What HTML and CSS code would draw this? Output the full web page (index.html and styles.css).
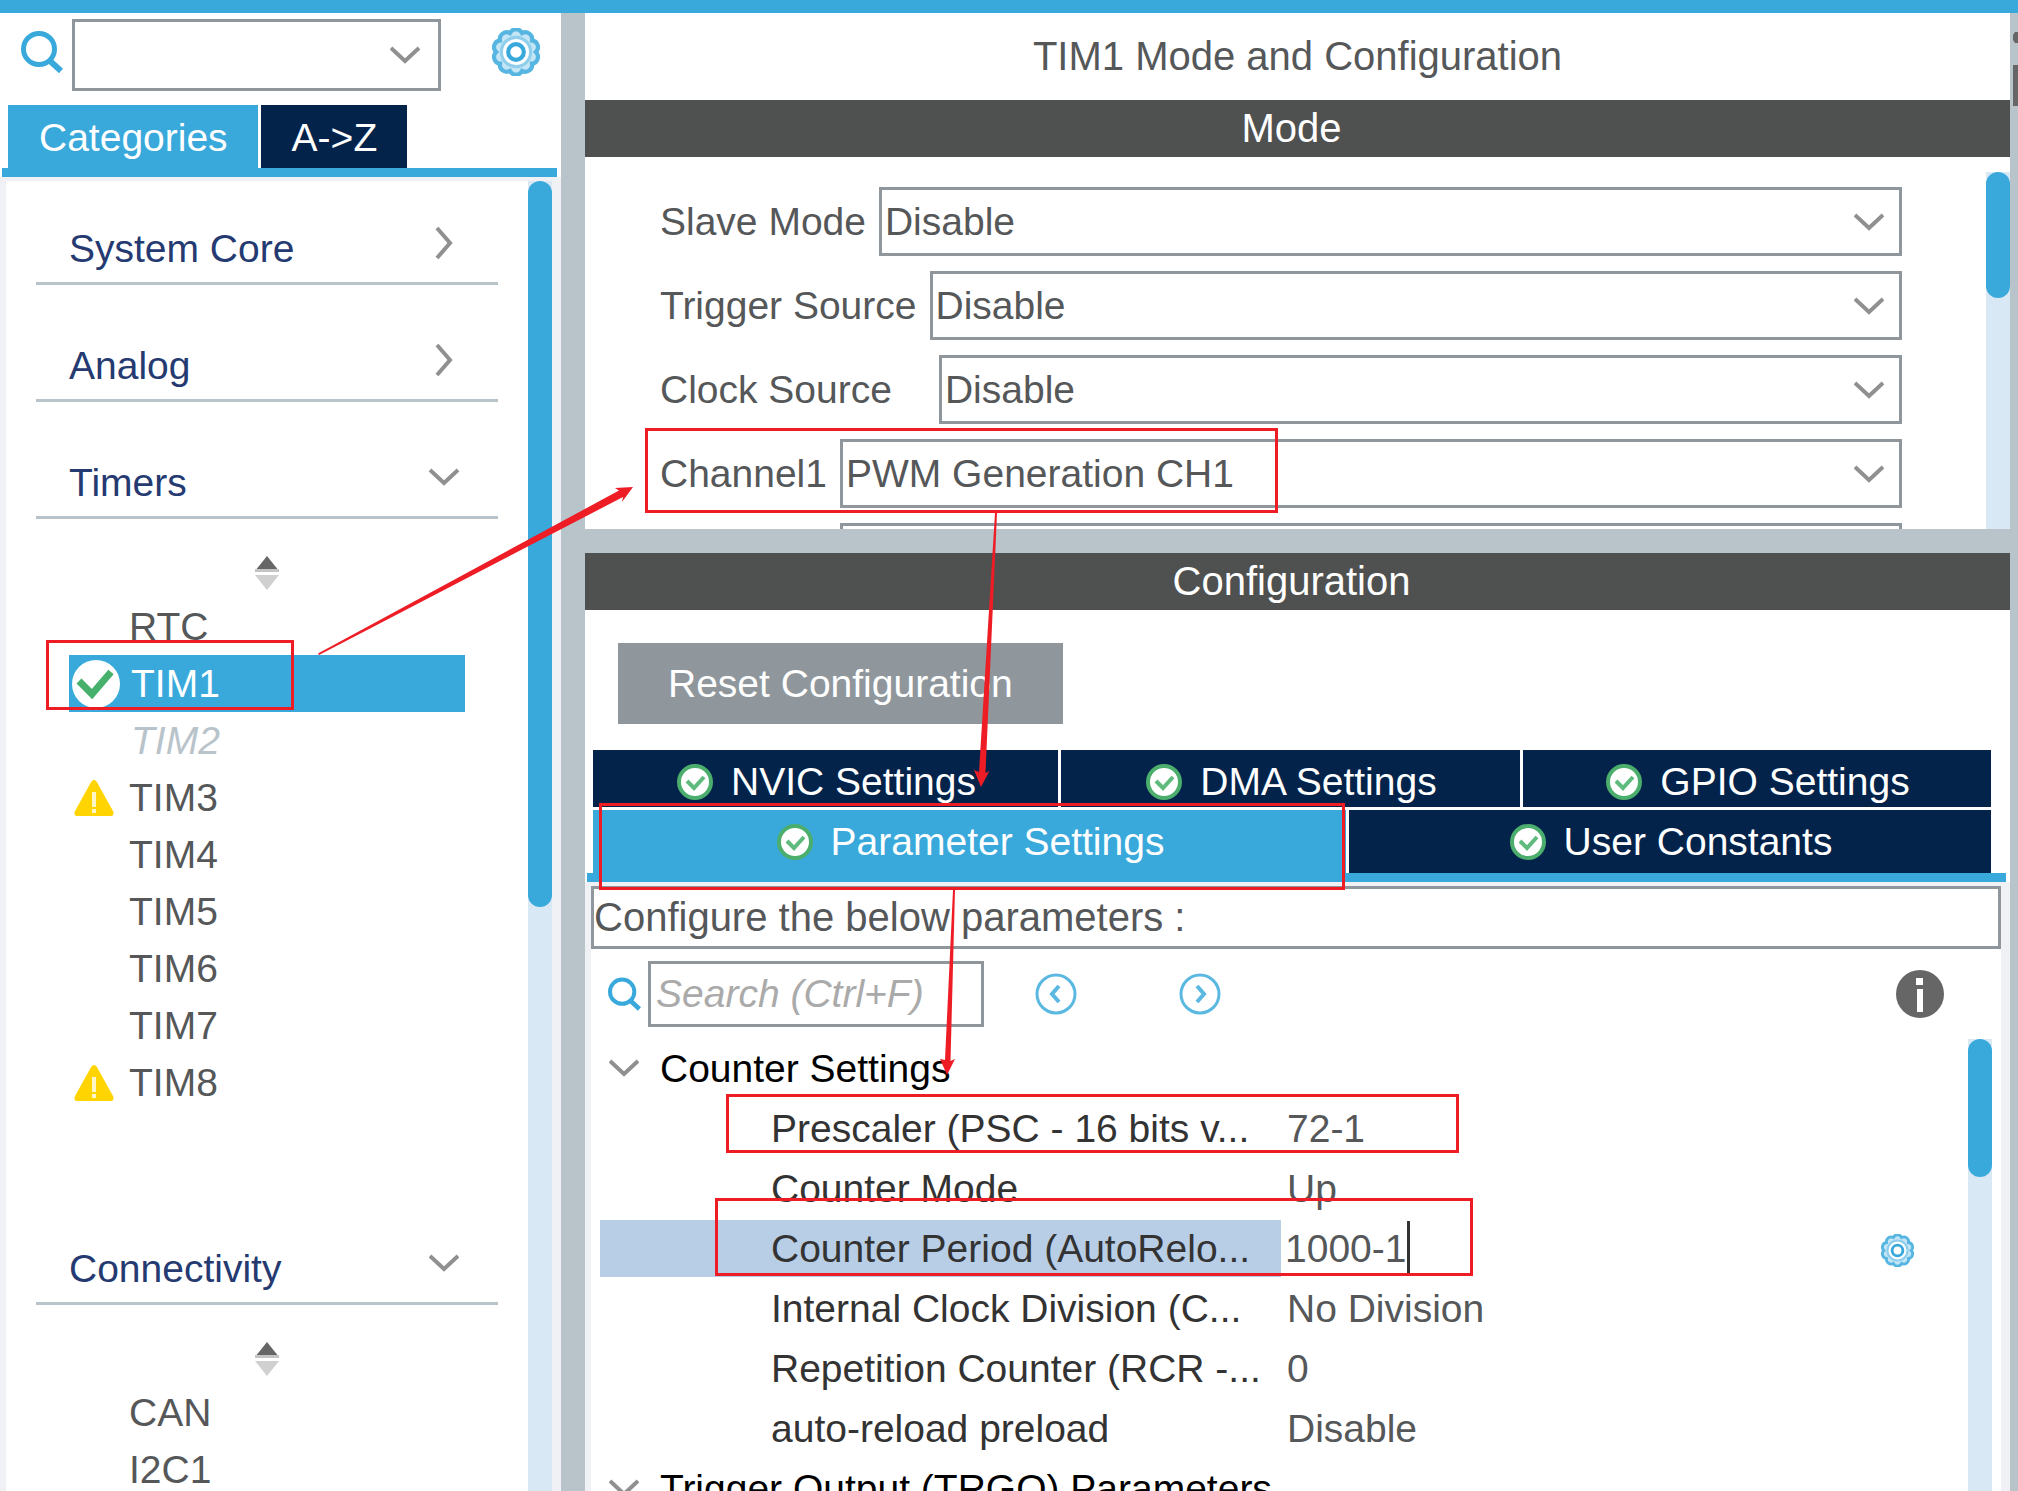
FILE: index.html
```html
<!DOCTYPE html>
<html lang="en">
<head>
<meta charset="utf-8">
<title>TIM1 Mode and Configuration</title>
<link rel="stylesheet" href="styles.css">
</head>
<body>
<svg class="defs" aria-hidden="true">
  <symbol id="chev-down" viewBox="0 0 30 18"><path d="M1 2 15 15 29 2" fill="none" stroke="#909090" stroke-width="4"/></symbol>
  <symbol id="chev-right" viewBox="0 0 18 34"><path d="M2 2 15 17 2 32" fill="none" stroke="#909090" stroke-width="4"/></symbol>
  <symbol id="magnifier" viewBox="0 0 42 42"><circle cx="18" cy="18" r="15.500" fill="none" stroke="#39a9dc" stroke-width="5"/><path d="M28 29 40 40" stroke="#39a9dc" stroke-width="6"/></symbol>
  <symbol id="gear" viewBox="1 1 46 46"><path d="M18.130 5.930A6.500 6.500 0 0 1 29.870 5.930A6.500 6.500 0 0 1 39.370 12.830A6.500 6.500 0 0 1 43 24A6.500 6.500 0 0 1 39.370 35.170A6.500 6.500 0 0 1 29.870 42.070A6.500 6.500 0 0 1 18.130 42.070A6.500 6.500 0 0 1 8.630 35.170A6.500 6.500 0 0 1 5 24A6.500 6.500 0 0 1 8.630 12.830A6.500 6.500 0 0 1 18.130 5.930Z" fill="#c4e5f5" stroke="#56b6e1" stroke-width="4"/><circle cx="24" cy="24" r="14" fill="#fff" stroke="#8fcfec" stroke-width="3"/><circle cx="24" cy="24" r="7.500" fill="#fff" stroke="#39a9dc" stroke-width="4"/></symbol>
  <symbol id="sort" viewBox="0 0 26 36"><path d="M13 1 25 16H1Z" fill="#666"/><path d="M13 35 25 20H1Z" fill="#d0d0d0"/><path d="M1 14H25V17H1Z" fill="#c4c4c4"/></symbol>
  <symbol id="warn" viewBox="0 0 40 36"><path d="M20 0Q22 0 24 4L39 31Q41 36 36 36H4Q-1 36 1 31L16 4Q18 0 20 0Z" fill="#ffd400"/><path d="M18 12H22V27H18ZM18 29H22V33H18Z" fill="#fff6c8"/></symbol>
  <symbol id="ok" viewBox="0 0 36 36"><circle cx="18" cy="18" r="16" fill="#fff" stroke="#4cae6c" stroke-width="4"/><path d="M10 17 17 24 27 13" fill="none" stroke="#5fbb7d" stroke-width="4"/></symbol>
  <symbol id="ok-large" viewBox="0 0 48 48"><circle cx="24" cy="24" r="24" fill="#fff"/><path d="M7 21 20 34 39 12" fill="none" stroke="#46b06c" stroke-width="7"/></symbol>
</svg>

<div class="app">
  <aside class="sidebar">
    <div class="toolbar">
      <svg class="icon-search"><use href="#magnifier"/></svg>
      <div class="combo">
        <select aria-label="Search peripherals"><option></option></select>
        <svg class="chev chev-inset"><use href="#chev-down"/></svg>
      </div>
      <button class="plain gear-btn" aria-label="Options"><svg class="icon-gear"><use href="#gear"/></svg></button>
    </div>
    <div class="side-tabs">
      <button class="tab active">Categories</button>
      <button class="tab">A-&gt;Z</button>
    </div>
    <div class="side-rule"></div>
    <div class="side-panel">
      <nav class="tree">
        <button class="category"><span>System Core</span><svg class="chev-r"><use href="#chev-right"/></svg></button>
        <button class="category"><span>Analog</span><svg class="chev-r"><use href="#chev-right"/></svg></button>
        <button class="category"><span>Timers</span><svg class="chev"><use href="#chev-down"/></svg></button>
        <button class="plain sort" aria-label="Sort"><svg><use href="#sort"/></svg></button>
        <ul class="items">
          <li><span class="slot"></span>RTC</li>
          <li class="selected"><span class="slot"><svg class="big"><use href="#ok-large"/></svg></span>TIM1</li>
          <li class="disabled"><span class="slot"></span>TIM2</li>
          <li><span class="slot"><svg class="small"><use href="#warn"/></svg></span>TIM3</li>
          <li><span class="slot"></span>TIM4</li>
          <li><span class="slot"></span>TIM5</li>
          <li><span class="slot"></span>TIM6</li>
          <li><span class="slot"></span>TIM7</li>
          <li><span class="slot"><svg class="small"><use href="#warn"/></svg></span>TIM8</li>
        </ul>
        <button class="category"><span>Connectivity</span><svg class="chev"><use href="#chev-down"/></svg></button>
        <button class="plain sort" aria-label="Sort"><svg><use href="#sort"/></svg></button>
        <ul class="items">
          <li><span class="slot"></span>CAN</li>
          <li><span class="slot"></span>I2C1</li>
        </ul>
      </nav>
      <div class="track"><div class="thumb thumb-tree"></div></div>
    </div>
  </aside>

  <main class="main">
    <section class="mode-pane">
      <h1 class="title">TIM1 Mode and Configuration</h1>
      <h2 class="bar">Mode</h2>
      <div class="mode-body">
        <div class="fields">
          <div class="field"><label for="slave">Slave Mode</label><div class="combo"><select id="slave"><option>Disable</option></select><svg class="chev chev-edge"><use href="#chev-down"/></svg></div></div>
          <div class="field"><label for="trigger">Trigger Source</label><div class="combo"><select id="trigger"><option>Disable</option></select><svg class="chev chev-edge"><use href="#chev-down"/></svg></div></div>
          <div class="field"><label class="wide" for="clock">Clock Source</label><div class="combo"><select id="clock"><option>Disable</option></select><svg class="chev chev-edge"><use href="#chev-down"/></svg></div></div>
          <div class="field"><label for="ch1">Channel1</label><div class="combo"><select id="ch1"><option>PWM Generation CH1</option></select><svg class="chev chev-edge"><use href="#chev-down"/></svg></div></div>
          <div class="field"><span class="blank"></span><div class="combo"><select aria-label="Channel"><option></option></select></div></div>
        </div>
        <div class="track"><div class="thumb thumb-mode"></div></div>
      </div>
    </section>

    <section class="config-pane">
      <h2 class="bar">Configuration</h2>
      <button class="reset">Reset Configuration</button>
      <div class="tabs">
        <div class="tab-row row-back">
          <button class="tab"><svg><use href="#ok"/></svg>NVIC Settings</button>
          <button class="tab"><svg><use href="#ok"/></svg>DMA Settings</button>
          <button class="tab"><svg><use href="#ok"/></svg>GPIO Settings</button>
        </div>
        <div class="tab-row row-front">
          <button class="tab active"><svg><use href="#ok"/></svg>Parameter Settings</button>
          <button class="tab"><svg><use href="#ok"/></svg>User Constants</button>
        </div>
      </div>
      <div class="config-rule"></div>
      <div class="config-frame">
        <div class="config-panel">
          <p class="hint">Configure the below parameters :</p>
          <div class="search-row">
            <svg class="icon-find"><use href="#magnifier"/></svg>
            <input class="find" type="text" placeholder="Search (Ctrl+F)" aria-label="Search">
            <button class="plain prev" aria-label="Previous"><svg viewBox="0 0 42 42"><circle cx="21" cy="21" r="19" fill="none" stroke="#5ab8e2" stroke-width="3"/><path d="M24 13 17 21 24 29" fill="none" stroke="#5ab8e2" stroke-width="4"/></svg></button>
            <button class="plain next" aria-label="Next"><svg viewBox="0 0 42 42"><circle cx="21" cy="21" r="19" fill="none" stroke="#5ab8e2" stroke-width="3"/><path d="M18 13 25 21 18 29" fill="none" stroke="#5ab8e2" stroke-width="4"/></svg></button>
            <button class="plain info" aria-label="Information"><svg viewBox="0 0 48 48"><circle cx="24" cy="24" r="24" fill="#666"/><path d="M20 8H27V15H20ZM21 19H27V42H21Z" fill="#fff"/></svg></button>
          </div>
          <div class="params">
            <table>
              <colgroup><col class="col-name"><col><col class="col-act"></colgroup>
              <tbody>
                <tr><th colspan="3" scope="colgroup"><span class="group"><svg class="chev"><use href="#chev-down"/></svg>Counter Settings</span></th></tr>
                <tr><td><span class="name">Prescaler (PSC - 16 bits v...</span></td><td class="value">72-1</td><td></td></tr>
                <tr><td><span class="name">Counter Mode</span></td><td class="value">Up</td><td></td></tr>
                <tr><td><label class="name current" for="period">Counter Period (AutoRelo...</label></td><td><span class="edit"><input id="period" type="text" value="1000-1"><span class="caret"></span></span></td><td><button class="plain row-gear" aria-label="Value options"><svg><use href="#gear"/></svg></button></td></tr>
                <tr><td><span class="name">Internal Clock Division (C...</span></td><td class="value">No Division</td><td></td></tr>
                <tr><td><span class="name">Repetition Counter (RCR -...</span></td><td class="value">0</td><td></td></tr>
                <tr><td><span class="name">auto-reload preload</span></td><td class="value">Disable</td><td></td></tr>
                <tr><th colspan="3" scope="colgroup"><span class="group"><svg class="chev"><use href="#chev-down"/></svg>Trigger Output (TRGO) Parameters</span></th></tr>
              </tbody>
            </table>
            <div class="track"><div class="thumb thumb-params"></div></div>
          </div>
        </div>
      </div>
    </section>
  </main>

  <div class="edge"><svg viewBox="0 0 8 100" width="8" height="100"><path d="M3 22 5 19H8V30H5L3 27ZM3 52H8V93H3Z" fill="#666"/></svg></div>
</div>

<!-- Red callouts drawn over the panes -->
<svg class="notes" width="2018" height="1491" viewBox="0 0 2018 1491" aria-hidden="true">
  <g fill="none" stroke="#ee1c25" stroke-width="3">
    <rect x="47.500" y="641.500" width="245" height="67"/>
    <rect x="646.500" y="429.500" width="630" height="82"/>
    <rect x="600.500" y="804.500" width="743" height="84"/>
    <rect x="727.500" y="1095.500" width="730" height="56"/>
    <rect x="716.500" y="1199.500" width="755" height="75"/>
  </g>
  <g fill="#ee1c25">
    <path d="M318 653.500 619 490.500 615 488 633 487 622 502 623 497 319 655Z"/>
    <path d="M995 513H997L985.500 773 989.500 771 981 787 974 770 979 772Z"/>
    <path d="M953 890H955L950.500 1061 955 1059 947 1075 940 1059 945 1060Z"/>
  </g>
</svg>
</body>
</html>
```
FILE: styles.css
```css
:root {
  --blue: #39a9dc;
  --navy: #03234b;
  --steel: #b8c3ca;
  --line: #8f979d;
  --bar: #4f5150;
  --text: #555759;
  --frame: #f0f1f4;
  --track: #d9e8f5;
}
* { box-sizing: border-box; }
html, body { height: 100%; }
body {
  margin: 0;
  overflow: hidden;
  background: #fff;
  color: var(--text);
  font: 39px/57px "Liberation Sans", Arial, sans-serif;
}
button, select, input { font: inherit; color: inherit; margin: 0; border-radius: 0; outline: 0; }
h1, h2, p, ul { margin: 0; padding: 0; font-weight: normal; }
svg { display: block; flex: none; }
.defs { position: absolute; width: 0; height: 0; }
.plain { display: block; padding: 0; border: 0; background: none; flex: none; }

.app {
  display: grid;
  grid-template-columns: 561px minmax(0, 1fr) 8px;
  height: 100vh;
  border-top: 13px solid var(--blue);
  overflow: hidden;
}
.edge { background: var(--steel); }

.combo { display: grid; flex: 1; align-items: center; min-width: 0; }
.combo > * { grid-area: 1 / 1; }
.combo select {
  appearance: none;
  width: 100%;
  height: 69px;
  padding: 0 3px;
  border: 3px solid var(--line);
  background: #fff;
}
.chev { width: 30px; height: 18px; }
.chev-r { width: 18px; height: 34px; margin-right: 6px; }
.chev-inset { justify-self: end; margin-right: 21px; }
.chev-edge { justify-self: end; margin-right: 18px; }

.track { flex: none; width: 24px; background: var(--track); }
.thumb { border-radius: 12px; background: var(--blue); }
.thumb-tree { height: 726px; }
.thumb-mode { height: 126px; }
.thumb-params { height: 138px; }

.tab {
  display: flex;
  align-items: center;
  justify-content: center;
  gap: 18px;
  padding: 0;
  border: 0;
  background: var(--navy);
  color: #fff;
}
.tab.active { background: var(--blue); }
.tab svg { width: 36px; height: 36px; }

/* Sidebar */
.sidebar { display: flex; flex-direction: column; min-height: 0; }
.toolbar { display: flex; align-items: center; padding: 6px 21px 14px; }
.toolbar select { height: 72px; }
.icon-search { width: 42px; height: 42px; margin: 0 9px 6px 0; }
.gear-btn { margin: 0 0 6px 51px; }
.icon-gear { width: 48px; height: 48px; }
.side-tabs { display: flex; gap: 3px; padding-left: 8px; }
.side-tabs .tab { height: 63px; padding: 2px 30px 0 31px; }
.side-rule { height: 9px; margin: 0 4px 0 2px; background: var(--blue); }
.side-panel {
  display: flex;
  flex: 1;
  min-height: 0;
  padding: 4px 9px 0 6px;
  background: var(--frame);
}
.tree { flex: 1; overflow: hidden; background: #fff; padding-top: 23px; }
.category {
  display: flex;
  align-items: center;
  justify-content: space-between;
  width: calc(100% - 60px);
  height: 81px;
  margin: 0 30px;
  padding: 0 39px 0 33px;
  border: 0;
  border-bottom: 3px solid var(--steel);
  background: none;
  color: #243a70;
}
.category span { padding-top: 10px; }
.category + .category { margin-top: 36px; }
.items + .category { margin-top: 113px; }
.sort { margin: 36px auto 7px; }
.sort svg { width: 26px; height: 36px; }
.items { list-style: none; margin: 0 63px; }
.items li { display: flex; align-items: center; height: 57px; }
.slot { flex: none; width: 60px; }
.big { width: 48px; height: 48px; margin-left: 3px; }
.small { width: 40px; height: 36px; margin-left: 5px; }
.items .selected { background: var(--blue); color: #fff; }
.items .disabled { color: var(--steel); font-style: italic; }
.selected .slot, .disabled .slot { width: 62px; }

/* Right-hand panes */
.main { display: flex; flex-direction: column; min-height: 0; border-left: 24px solid var(--steel); }
.mode-pane { display: flex; flex-direction: column; flex: 516 1 0; min-height: 0; overflow: hidden; }
.config-pane {
  display: flex;
  flex-direction: column;
  flex: 938 1 0;
  min-height: 0;
  overflow: hidden;
  border-top: 24px solid var(--steel);
}
.title { flex: none; height: 87px; font-size: 40px; line-height: 87px; text-align: center; }
.bar { flex: none; height: 57px; padding-right: 12px; background: var(--bar); color: #fff; font-size: 40px; text-align: center; }
.mode-body { display: flex; flex: 1; min-height: 0; padding-top: 15px; }
.fields { flex: 1; min-width: 0; padding: 15px 84px 0 75px; }
.field { display: flex; align-items: center; gap: 13px; margin-bottom: 15px; }
.field label { flex: none; white-space: nowrap; }
.field .wide { padding-right: 34px; }
.blank { flex: none; width: 167px; }

.reset {
  flex: none;
  align-self: flex-start;
  margin: 33px 0 26px 33px;
  padding: 12px 50px;
  border: 0;
  background: var(--line);
  color: #fff;
}
.tabs { display: grid; gap: 3px; padding: 0 19px 0 8px; }
.tab-row { display: grid; gap: 3px; }
.row-back { grid-template-columns: 465fr 459fr 468fr; }
.row-front { grid-template-columns: 753fr 642fr; }
.row-back .tab { height: 57px; padding: 6px 0 0 2px; }
.row-front .tab { height: 63px; padding-left: 2px; }
.config-rule { flex: none; height: 9px; margin: 0 4px 0 2px; background: var(--blue); }
.config-frame { display: flex; flex: 1; min-height: 0; padding: 4px 9px 0 6px; background: var(--frame); }
.config-panel { display: flex; flex-direction: column; flex: 1; min-width: 0; background: #fff; }
.hint { flex: none; border: 3px solid var(--line); font-size: 40px; }
.search-row { display: flex; flex: none; align-items: center; margin: 12px 57px 11px 17px; }
.icon-find { width: 33px; height: 36px; margin-right: 7px; }
.find { width: 336px; height: 66px; padding: 0 5px; border: 3px solid var(--line); background: #fff; }
.find::placeholder { color: #aaa; font-style: italic; opacity: 1; }
.prev, .next { width: 42px; }
.prev { margin-left: 51px; }
.next { margin-left: 102px; }
.info { width: 48px; margin-left: auto; }
.params { display: flex; flex: 1; min-height: 0; padding-right: 9px; }
.params .track { margin-top: 1px; }
.params table { flex: 1; align-self: flex-start; border-collapse: collapse; table-layout: fixed; }
.col-name { width: 690px; }
.col-act { width: 87px; }
.params tr { height: 60px; }
.params td, .params th { padding: 0; font-weight: normal; text-align: left; white-space: nowrap; }
.params .value { padding-left: 6px; }
.group { display: flex; align-items: center; gap: 21px; padding-left: 18px; color: #000; }
.name { display: block; margin-left: 9px; padding-left: 171px; color: #333; }
.current { background: #b8cee6; }
.edit { display: flex; align-items: center; padding-left: 4px; }
.edit input { width: 122px; height: 54px; padding: 0; border: 0; background: none; }
.caret { width: 3px; height: 54px; background: #333; }
.row-gear { padding-top: 5px; }
.row-gear svg { width: 33px; height: 33px; }

.notes { position: absolute; top: 0; left: 0; pointer-events: none; }
```
